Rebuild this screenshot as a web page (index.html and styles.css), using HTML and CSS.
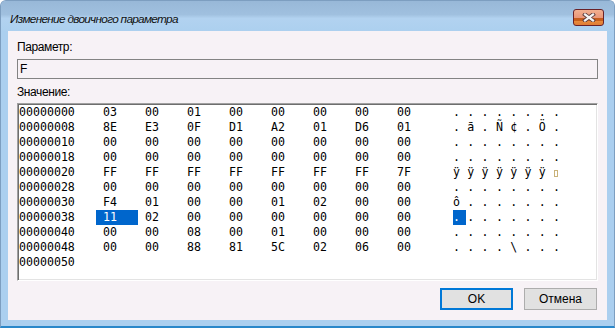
FILE: index.html
```html
<!DOCTYPE html>
<html lang="ru">
<head>
    <meta charset="UTF-8">
    <title>Изменение двоичного параметра</title>
    <link rel="stylesheet" href="styles.css">
</head>
<body>
    <div class="window">
        <div class="titlebar">
            <span class="title">Изменение двоичного параметра</span>
            <button class="close-button" title="Закрыть">
                <svg width="14" height="9" viewBox="0 0 14 9">
                    <path d="M3 1.5 L11 7.5 M11 1.5 L3 7.5" stroke="#5a3a3a" stroke-width="4" stroke-linecap="square"/>
                    <path d="M3 1.5 L11 7.5 M11 1.5 L3 7.5" stroke="#f4f4f4" stroke-width="2.2" stroke-linecap="square"/>
                </svg>
            </button>
        </div>

        <div class="client">
            <div class="field-label">Параметр:</div>
            <div class="name-box">F</div>

            <div class="field-label value-label">Значение:</div>
            <div class="hex-box" id="hex-box">
                <!-- rows are built by the script below -->
            </div>

            <div class="buttons">
                <button class="btn btn-default">OK</button>
                <button class="btn">Отмена</button>
            </div>
        </div>
    </div>

    <script>
        const data = [
            "03 00 01 00 00 00 00 00",
            "8E E3 0F D1 A2 01 D6 01",
            "00 00 00 00 00 00 00 00",
            "00 00 00 00 00 00 00 00",
            "FF FF FF FF FF FF FF 7F",
            "00 00 00 00 00 00 00 00",
            "F4 01 00 00 01 02 00 00",
            "11 02 00 00 00 00 00 00",
            "00 00 08 00 01 00 00 00",
            "00 00 88 81 5C 02 06 00"
        ];
        const selected = 7 * 8;

        function asciiChar(b) {
            if (b === 0x7f) return '<span class="box-glyph"></span>';
            if ((b > 0x20 && b < 0x7f) || b >= 0xa0) return String.fromCharCode(b);
            return ".";
        }

        function buildRows() {
            const box = document.getElementById("hex-box");
            let html = "";
            data.forEach((line, r) => {
                const bytes = line.split(" ");
                const addr = (r * 8).toString(16).toUpperCase().padStart(8, "0");
                const hex = bytes.map((h, i) => {
                    const cls = r * 8 + i === selected ? "cell selected" : "cell";
                    return `<span class="${cls}">${h}</span>`;
                }).join("");
                const ascii = bytes.map((h, i) => {
                    const cls = r * 8 + i === selected ? "ch selected" : "ch";
                    return `<span class="${cls}">${asciiChar(parseInt(h, 16))}</span>`;
                }).join("");
                html += `<div class="hex-row"><span class="addr">${addr}</span>${hex}<span class="ascii">${ascii}</span></div>`;
            });
            const end = (data.length * 8).toString(16).toUpperCase().padStart(8, "0");
            html += `<div class="hex-row"><span class="addr">${end}</span></div>`;
            box.innerHTML = html;
        }

        buildRows();
    </script>
</body>
</html>
```

FILE: styles.css
```css
body {
    margin: 0;
    background-color: #fff;
    font-family: "Liberation Sans", Arial, sans-serif;
    font-size: 12px;
    color: #000;
}
.window {
    width: 615px;
    height: 328px;
    box-sizing: border-box;
    display: flex;
    flex-direction: column;
    background-color: #abcfef;
    border: 1px solid #7d9ec0;
    border-bottom: 2px solid #2a87c9;
    border-radius: 6px 6px 0 0;
}
.titlebar {
    height: 30px;
    flex: none;
    display: flex;
    align-items: flex-start;
    justify-content: space-between;
    padding: 0 10px 0 9px;
    border-radius: 5px 5px 0 0;
    background: linear-gradient(#98b8d8 0, #a0c0df 45%, #b2d2f0 58%, #acd0ef 100%);
}
.title {
    margin-top: 11px;
    line-height: 15px;
    font-size: 11.8px;
    letter-spacing: -0.7px;
    font-style: italic;
    color: #111;
}
.close-button {
    margin-top: 8px;
    width: 31px;
    height: 17px;
    padding: 0;
    border: 1px solid #6a2228;
    border-radius: 3px;
    background: linear-gradient(#f2b090 0, #e9977a 50%, #c55a1e 52%, #c8601c 72%, #e88a3c 74%, #df7d36 100%);
    display: flex;
    align-items: center;
    justify-content: center;
}
.close-button svg {
    display: block;
}
.client {
    flex: 1;
    margin: 0 7px 6px 7px;
    padding: 9px 9px 0 9px;
    background-color: #f7f2f6;
    display: flex;
    flex-direction: column;
}
.field-label {
    line-height: 15px;
    letter-spacing: -0.4px;
    color: #000;
}
.name-box {
    margin-top: 4px;
    height: 20px;
    box-sizing: border-box;
    border: 1px solid #838383;
    padding-left: 2px;
    line-height: 18px;
}
.value-label {
    margin-top: 6px;
}
.hex-box {
    margin-top: 3px;
    height: 178px;
    box-sizing: border-box;
    border: 1px solid;
    border-color: #a0a0a0 #fff #fff #a0a0a0;
    box-shadow: inset 1px 1px 0 #6e6e6e, inset -1px -1px 0 #e3e3e3;
    background-color: #fff;
    padding: 1px 0 0 1px;
    font-family: "DejaVu Sans Mono", "Liberation Mono", monospace;
    font-size: 11.6px;
}
.hex-row {
    display: flex;
    height: 15px;
    line-height: 15px;
    white-space: pre;
}
.addr {
    width: 77px;
    flex: none;
}
.cell {
    width: 42px;
    flex: none;
    box-sizing: border-box;
    padding-left: 7px;
}
.ascii {
    margin-left: 21px;
    display: flex;
}
.ch {
    width: 14.3px;
    flex: none;
}
.selected {
    background-color: #0066cc;
    color: #fff;
}
.ch.selected {
    width: 13.3px;
    margin-right: 1px;
}
.box-glyph {
    display: inline-block;
    width: 2px;
    height: 5px;
    margin-left: 1px;
    border: 1px solid #c9b37a;
    vertical-align: -1px;
}
.buttons {
    margin-top: 7px;
    display: flex;
    justify-content: flex-end;
    gap: 11px;
    padding-right: 1px;
}
.btn {
    width: 73px;
    height: 22px;
    box-sizing: border-box;
    border: 1px solid #adadad;
    background-color: #e1e1e1;
    font-family: "Liberation Sans", Arial, sans-serif;
    font-size: 12px;
    color: #000;
    padding: 0;
}
.btn-default {
    border: 2px solid #0078d7;
}
```
